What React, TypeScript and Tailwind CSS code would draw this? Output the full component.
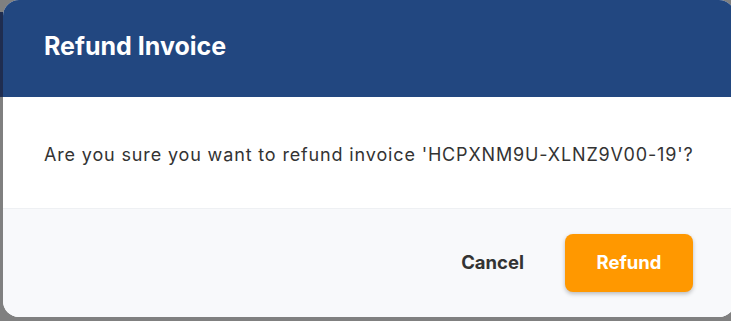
export default function App() {
  return (
    <div className="w-[731px] h-[321px] bg-[#808080] overflow-hidden flex">
      {/* page peeking out behind the backdrop */}
      <div className="w-[3px] shrink-0 flex flex-col">
        <div className="h-[12px]" />
        <div className="h-[85px] bg-[#1f2d50]" />
      </div>

      <div className="w-[732px] h-[317px] shrink-0 rounded-[16px] overflow-hidden flex flex-col bg-white">
        <div className="h-[97px] bg-[#224780] flex items-center px-[41px] pb-[3px]">
          <h2 className="text-[25px] font-bold text-white font-['Inter',sans-serif]">Refund Invoice</h2>
        </div>

        <div className="h-[111px] flex items-center px-[41px] pt-[3px]">
          <p className="text-[18px] tracking-[0.85px] text-[#333333] font-['Inter',sans-serif]">
            Are you sure you want to refund invoice 'HCPXNM9U-XLNZ9V00-19'?
          </p>
        </div>

        <div className="flex-1 bg-[#f8f9fb] border-t border-[#eef0f3] flex items-center justify-end pr-[42px] gap-[41px]">
          <button className="text-[18.5px] font-bold text-[#333333] font-['Inter',sans-serif]">Cancel</button>
          <button className="w-[128px] h-[58px] rounded-[8px] bg-[#ff9800] text-white text-[18.5px] font-bold font-['Inter',sans-serif] shadow-[0_2px_4px_rgba(0,0,0,0.25)]">
            Refund
          </button>
        </div>
      </div>
    </div>
  );
}
